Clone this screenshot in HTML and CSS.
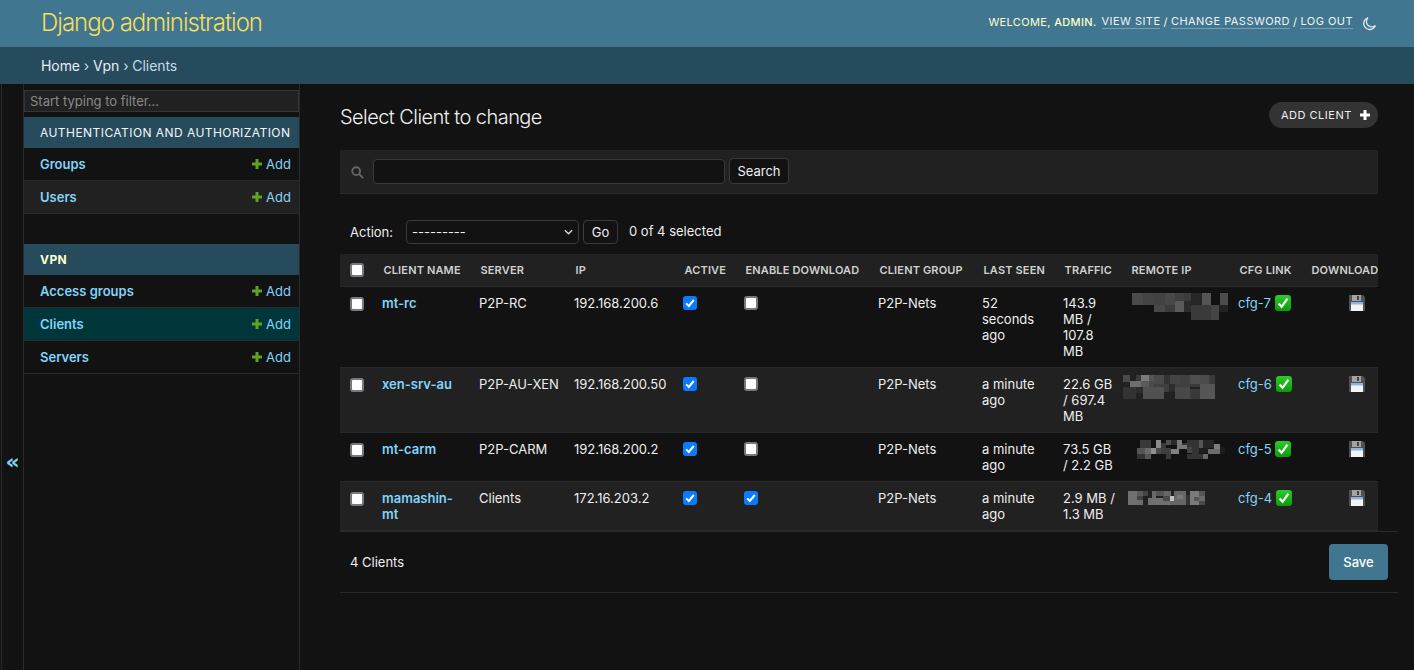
FILE: index.html
```html
<!DOCTYPE html>
<html lang="en">
<head>
<meta charset="utf-8">
<title>Select Client to change</title>
<link rel="stylesheet" href="styles.css">
</head>
<body>
<svg class="defs" width="0" height="0" aria-hidden="true">
  <defs>
    <symbol id="plus" viewBox="0 0 10 10"><path d="M3.5 0h3v3.5H10v3H6.5V10h-3V6.5H0v-3h3.5z"/></symbol>
    <linearGradient id="grn" x1="0" y1="0" x2="0" y2="1"><stop offset="0" stop-color="#2ccb2c"/><stop offset="1" stop-color="#0a9c0a"/></linearGradient>
    <symbol id="ok" viewBox="0 0 16 16"><rect width="16" height="16" rx="3.2" fill="url(#grn)"/><path d="M3.6 8.4l3 3.4 5.8-8.2" fill="none" stroke="#fff" stroke-width="2.2"/></symbol>
    <symbol id="disk" viewBox="0 0 16 16"><path d="M0 0h14l2 2v14H0z" fill="#515151"/><rect x="3" y="0" width="9" height="6" fill="#a3a3a3"/><rect x="8" y="1" width="2" height="4" fill="#444"/><rect x="2" y="7" width="12" height="9" fill="#f4f4f4"/><rect x="2" y="7" width="12" height="2.5" fill="#8fb4e0"/></symbol>
  </defs>
</svg>

<header class="topbar">
  <a class="brand" href="#">Django administration</a>
  <div class="userlinks">
    <span class="welcome">Welcome, <strong>admin</strong>.</span>
    <a href="#">View site</a> <span class="sep">/</span>
    <a href="#">Change password</a> <span class="sep">/</span>
    <a href="#">Log out</a>
    <svg class="moon" viewBox="0 0 24 24" fill="none" stroke="#e4e8ea" stroke-width="2"><path d="M9.5 2.8a9.6 9.6 0 1 0 11.9 12.4A8.6 8.6 0 0 1 9.5 2.8z"/></svg>
  </div>
</header>
<nav class="crumbs"><a href="#">Home</a> › <a href="#">Vpn</a> › Clients</nav>

<div class="page">
  <button class="toggle" type="button">«</button>
  <aside class="sidebar">
    <input class="filter" type="text" placeholder="Start typing to filter...">
    <section class="module">
      <h2 class="caption">Authentication and Authorization</h2>
      <div class="navrow"><a class="navlink" href="#">Groups</a><a class="addlink" href="#"><svg class="plus"><use href="#plus"/></svg>Add</a></div>
      <div class="navrow alt"><a class="navlink" href="#">Users</a><a class="addlink" href="#"><svg class="plus"><use href="#plus"/></svg>Add</a></div>
    </section>
    <section class="module">
      <h2 class="caption current">VPN</h2>
      <div class="navrow"><a class="navlink" href="#">Access groups</a><a class="addlink" href="#"><svg class="plus"><use href="#plus"/></svg>Add</a></div>
      <div class="navrow selected"><a class="navlink" href="#">Clients</a><a class="addlink" href="#"><svg class="plus"><use href="#plus"/></svg>Add</a></div>
      <div class="navrow"><a class="navlink" href="#">Servers</a><a class="addlink" href="#"><svg class="plus"><use href="#plus"/></svg>Add</a></div>
    </section>
  </aside>

  <main class="content">
    <div class="titlebar">
      <h1 class="title">Select Client to change</h1>
      <a class="addbtn" href="#">Add Client<svg class="plus-w"><use href="#plus"/></svg></a>
    </div>

    <form class="searchbar">
      <svg class="searchicon" viewBox="0 0 14 14" fill="none" stroke="#666" stroke-width="2"><circle cx="5.6" cy="5.6" r="4.2"/><path d="M8.8 8.8l4.2 4.2"/></svg>
      <input class="searchinput" type="text">
      <button class="btn search" type="button">Search</button>
    </form>

    <div class="actions">
      <label class="actionlabel">Action:</label>
      <div class="selectbox">---------<svg class="chev" viewBox="0 0 10 6" fill="none" stroke="#ddd" stroke-width="1.4"><path d="M1 1l4 4 4-4"/></svg></div>
      <button class="btn go" type="button">Go</button>
      <span class="counter">0 of 4 selected</span>
    </div>

    <div class="tablewrap">
      <table class="results">
        <colgroup>
          <col class="c0"><col class="c1"><col class="c2"><col class="c3"><col class="c4"><col class="c5"><col class="c6"><col class="c7"><col class="c8"><col class="c9"><col class="c10"><col class="c11">
        </colgroup>
        <thead>
          <tr>
            <th class="chk"><input class="cb" type="checkbox"></th>
            <th>Client name</th><th>Server</th><th>IP</th><th>Active</th><th>Enable download</th><th>Client group</th><th>Last seen</th><th>Traffic</th><th>Remote IP</th><th>CFG Link</th><th class="dl-h">Download</th>
          </tr>
        </thead>
        <tbody>
          <tr>
            <td class="chk"><input class="cb" type="checkbox"></td>
            <td><a class="name" href="#">mt-rc</a></td><td>P2P-RC</td><td>192.168.200.6</td>
            <td><input class="cb" type="checkbox" checked></td><td><input class="cb" type="checkbox"></td>
            <td>P2P-Nets</td><td>52 seconds ago</td><td>143.9 MB / 107.8 MB</td>
            <td><svg class="blob b1" viewBox="0 0 345 108"><path fill="#4a4a4a" d="M36 15h33v36H36z"/><path fill="#444" d="M69 15h33v36H69z"/><path fill="#424242" d="M102 15h33v36h-33z"/><path fill="#484848" d="M135 15h30v36h-30z"/><path fill="#3f3f3f" d="M165 15h27v24h-27z"/><path fill="#3b3b3b" d="M192 15h21v24h-21z"/><path fill="#262626" d="M213 15h33v36h-33z"/><path fill="#555" d="M246 15h27v36h-27z"/><path fill="#4c4c4c" d="M300 15h24v36h-24z"/><path fill="#484848" d="M102 51h33v21h-33z"/><path fill="#3c3c3c" d="M135 51h30v21h-30z"/><path fill="#5a5a5a" d="M165 39h27v33h-27z"/><path fill="#2b2b2b" d="M192 39h21v33h-21z"/><path fill="#3a3a3a" d="M213 51h60v45h-60z"/><path fill="#444" d="M273 51h24v45h-24z"/><path fill="#222" d="M297 51h27v21h-27z"/></svg></td>
            <td><a class="cfg" href="#">cfg-7</a> <svg class="ok"><use href="#ok"/></svg></td>
            <td class="dl"><svg class="disk"><use href="#disk"/></svg></td>
          </tr>
          <tr class="alt">
            <td class="chk"><input class="cb" type="checkbox"></td>
            <td><a class="name" href="#">xen-srv-au</a></td><td>P2P-AU-XEN</td><td>192.168.200.50</td>
            <td><input class="cb" type="checkbox" checked></td><td><input class="cb" type="checkbox"></td>
            <td>P2P-Nets</td><td>a minute ago</td><td>22.6 GB / 697.4 MB</td>
            <td><svg class="blob b2" viewBox="0 0 330 108"><path fill="#4a4a4a" d="M24 18h21v21H24z"/><path fill="#3a3a3a" d="M63 18h15v18H63z"/><path fill="#7a7a7a" d="M78 18h24v18H78z"/><path fill="#555" d="M102 18h15v18h-15z"/><path fill="#4a4a4a" d="M117 18h30v27h-30z"/><path fill="#333" d="M147 18h18v27h-18z"/><path fill="#434343" d="M165 18h30v27h-30z"/><path fill="#404040" d="M195 18h30v27h-30z"/><path fill="#4e4e4e" d="M225 18h30v27h-30z"/><path fill="#4c4c4c" d="M255 18h27v27h-27z"/><path fill="#3a3a3a" d="M282 18h18v27h-18z"/><path fill="#6e6e6e" d="M45 36h33v18H45z"/><path fill="#5a5a5a" d="M78 36h24v18H78z"/><path fill="#4a4a4a" d="M102 36h15v18h-15z"/><path fill="#3f3f3f" d="M117 45h108v9H117z"/><path fill="#3a3a3a" d="M225 45h30v9h-30z"/><path fill="#333" d="M24 54h39v36H24z"/><path fill="#2c2c2c" d="M63 54h21v18H63z"/><path fill="#515151" d="M84 54h63v36H84z"/><path fill="#3e3e3e" d="M147 54h15v15h-15z"/><path fill="#2c2c2c" d="M162 45h18v23h-18z"/><path fill="#484848" d="M180 54h45v36h-45z"/><path fill="#3a3a3a" d="M225 60h30v30h-30z"/><path fill="#565656" d="M255 45h45v45h-45z"/></svg></td>
            <td><a class="cfg" href="#">cfg-6</a> <svg class="ok"><use href="#ok"/></svg></td>
            <td class="dl"><svg class="disk"><use href="#disk"/></svg></td>
          </tr>
          <tr>
            <td class="chk"><input class="cb" type="checkbox"></td>
            <td><a class="name" href="#">mt-carm</a></td><td>P2P-CARM</td><td>192.168.200.2</td>
            <td><input class="cb" type="checkbox" checked></td><td><input class="cb" type="checkbox"></td>
            <td>P2P-Nets</td><td>a minute ago</td><td>73.5 GB / 2.2 GB</td>
            <td><svg class="blob b3" viewBox="0 0 330 108"><path fill="#3a3a3a" d="M45 15h33v24H45z"/><path fill="#8a8a8a" d="M93 15h15v24H93z"/><path fill="#3a3a3a" d="M108 24h15v15h-15z"/><path fill="#4f4f4f" d="M123 15h15v15h-15z"/><path fill="#2a2a2a" d="M138 15h18v15h-18z"/><path fill="#7a7a7a" d="M156 15h15v15h-15z"/><path fill="#333" d="M171 24h15v6h-15z"/><path fill="#333" d="M186 15h36v24h-36z"/><path fill="#555" d="M222 15h12v24h-12z"/><path fill="#262626" d="M234 15h33v24h-33z"/><path fill="#555" d="M36 39h24v18H36z"/><path fill="#6a6a6a" d="M60 39h18v18H60z"/><path fill="#8f8f8f" d="M78 39h15v18H78z"/><path fill="#4a4a4a" d="M93 39h15v18H93z"/><path fill="#3f3f3f" d="M108 39h30v18h-30z"/><path fill="#808080" d="M138 42h24v15h-24z"/><path fill="#777" d="M156 30h30v12h-30z"/><path fill="#444" d="M186 36h15v18h-15z"/><path fill="#333" d="M201 39h21v18h-21z"/><path fill="#1e1e1e" d="M222 39h27v15h-27z"/><path fill="#6b6b6b" d="M249 42h36v15h-36z"/><path fill="#7d7d7d" d="M267 27h18v15h-18z"/><path fill="#1c1c1c" d="M285 36h15v21h-15z"/><path fill="#333" d="M36 57h24v15H36z"/><path fill="#555" d="M60 57h18v15H60z"/><path fill="#3a3a3a" d="M123 57h15v15h-15z"/><path fill="#333" d="M186 57h48v15h-48z"/><path fill="#6a6a6a" d="M234 57h15v15h-15z"/></svg></td>
            <td><a class="cfg" href="#">cfg-5</a> <svg class="ok"><use href="#ok"/></svg></td>
            <td class="dl"><svg class="disk"><use href="#disk"/></svg></td>
          </tr>
          <tr class="alt">
            <td class="chk"><input class="cb" type="checkbox"></td>
            <td><a class="name" href="#">mamashin-mt</a></td><td>Clients</td><td>172.16.203.2</td>
            <td><input class="cb" type="checkbox" checked></td><td><input class="cb" type="checkbox" checked></td>
            <td>P2P-Nets</td><td>a minute ago</td><td>2.9 MB / 1.3 MB</td>
            <td><svg class="blob b4" viewBox="0 0 330 108"><path fill="#707070" d="M24 21h27v42H24z"/><path fill="#5a5a5a" d="M51 21h18v15H51z"/><path fill="#444" d="M69 21h15v15H69z"/><path fill="#444" d="M51 36h18v12H51z"/><path fill="#6d6d6d" d="M51 48h18v15H51z"/><path fill="#6a6a6a" d="M96 21h12v21H96z"/><path fill="#555" d="M108 21h24v15h-24z"/><path fill="#666" d="M132 21h21v15h-21z"/><path fill="#707070" d="M84 42h66v21H84z"/><path fill="#4a4a4a" d="M129 36h21v15h-21z"/><path fill="#c0c0c0" d="M150 36h12v15h-12z"/><path fill="#666" d="M150 51h48v12h-48z"/><path fill="#666" d="M162 21h36v30h-36z"/><path fill="#777" d="M171 33h18v12h-18z"/><path fill="#333" d="M198 33h12v30h-12z"/><path fill="#7a7a7a" d="M210 21h27v42h-27z"/><path fill="#555" d="M222 39h15v12h-15z"/><path fill="#555" d="M237 21h18v15h-18z"/><path fill="#6a6a6a" d="M237 36h18v15h-18z"/><path fill="#4a4a4a" d="M237 51h18v12h-18z"/></svg></td>
            <td><a class="cfg" href="#">cfg-4</a> <svg class="ok"><use href="#ok"/></svg></td>
            <td class="dl"><svg class="disk"><use href="#disk"/></svg></td>
          </tr>
        </tbody>
      </table>
    </div>

    <div class="paginator">
      <span>4 Clients</span>
      <button class="save" type="button">Save</button>
    </div>
  </main>
</div>
</body>
</html>
```
FILE: styles.css
```css
* { box-sizing: border-box; }
html, body { height: 100%; }
body {
  margin: 0;
  background: #121212;
  color: #eeeeee;
  font-family: Inter, "Liberation Sans", sans-serif;
  font-size: 13px;
  line-height: 16px;
  overflow: hidden;
  display: flex;
  flex-direction: column;
}
a { text-decoration: none; }
.defs { position: absolute; }

.topbar {
  height: 47px;
  flex: none;
  background: #417690;
  display: flex;
  align-items: center;
  justify-content: space-between;
  padding: 0 37px 0 41px;
}
.brand { color: #f5dd5d; font-size: 24px; font-weight: 300; line-height: 30px; letter-spacing: -1px; padding-bottom: 2px; }
.userlinks {
  display: flex;
  align-items: center;
  gap: 3px;
  font-size: 11px;
  letter-spacing: 0.46px;
  text-transform: uppercase;
  color: #ffc;
  white-space: nowrap;
  padding-bottom: 4px;
}
.welcome { margin-right: 2px; letter-spacing: 0.35px; }
.userlinks strong { font-weight: 500; }
.userlinks a {
  color: #f0f3f5;
  border-bottom: 1px solid rgba(255,255,255,0.3);
  line-height: 13px;
}
.sep { color: #ffc; }
.moon { width: 15px; height: 15px; margin-left: 6px; margin-top: 3px; }

.crumbs {
  height: 37px;
  flex: none;
  background: #264b5d;
  padding: 0 41px;
  color: #c4dce8;
  font-size: 14px;
  line-height: 37px;
  letter-spacing: -0.07px;
}
.crumbs a { color: #e6eef2; }

.page { flex: 1; display: flex; min-height: 0; }
.toggle {
  width: 23px;
  flex: none;
  background: #121212;
  border: 0;
  border-left: 1px solid #2a2a2a;
  border-right: 1px solid #2a2a2a;
  color: #81d4fa;
  font-family: "DejaVu Sans", sans-serif;
  font-size: 22px;
  font-weight: 700;
  padding: 168px 0 0;
  margin: 0 0 0 1px;
  display: flex;
  align-items: center;
  justify-content: center;
}
.sidebar {
  width: 276px;
  flex: none;
  border-right: 1px solid #2a2a2a;
  padding-top: 6px;
}
.filter {
  display: block;
  width: 100%;
  height: 22px;
  background: #212121;
  border: 1px solid #353535;
  color: #eee;
  font: 13px Inter, sans-serif;
  padding: 0 5px;
  margin-bottom: 5px;
  outline: 0;
}
.filter::placeholder { color: #8a8a8a; opacity: 1; }
.module { margin-bottom: 30px; }
.caption {
  margin: 0;
  height: 31px;
  background: #264b5d;
  color: #f5f5f5;
  font-size: 12px;
  font-weight: 400;
  letter-spacing: 0.44px;
  line-height: 31px;
  padding-left: 16px;
  text-transform: uppercase;
  white-space: nowrap;
}
.caption.current { color: #ffc; font-weight: 700; }
.navrow {
  height: 33px;
  display: flex;
  align-items: center;
  justify-content: space-between;
  padding: 0 8px 0 16px;
  border-bottom: 1px solid #2a2a2a;
}
.navrow.alt { background: #212121; }
.navrow.selected { background: #00363a; }
.navlink { color: #81d4fa; font-weight: 600; }
.addlink { color: #81d4fa; display: flex; align-items: center; gap: 4px; }
.plus { width: 10px; height: 10px; fill: #5fa225; }

.content {
  flex: 1;
  min-width: 0;
  padding: 18px 16px 0 40px;
}
.titlebar {
  display: flex;
  align-items: center;
  justify-content: space-between;
  margin-right: 20px;
  height: 30px;
  margin-bottom: 18px;
}
.title { margin: 0; font-size: 20px; font-weight: 300; color: #f0f0f0; line-height: 30px; letter-spacing: -0.56px; }
.addbtn {
  align-self: flex-start;
  height: 26px;
  width: 109px;
  border-radius: 13px;
  background: #333;
  color: #f0f0f0;
  font-size: 11px;
  letter-spacing: 0.5px;
  text-transform: uppercase;
  display: flex;
  align-items: center;
  justify-content: space-between;
  padding: 0 8px 0 12px;
}
.plus-w { width: 10px; height: 10px; fill: #fff; }

.searchbar {
  height: 44px;
  margin-right: 20px;
  background: #212121;
  border-bottom: 1px solid #2a2a2a;
  display: flex;
  align-items: center;
  padding: 0 0 1px 11px;
}
.searchicon { width: 13px; height: 13px; margin-right: 9px; margin-top: 2px; }
.searchinput {
  width: 352px;
  height: 25px;
  background: #121212;
  border: 1px solid #3a3a3a;
  border-radius: 4px;
  margin-right: 4px;
}
.btn {
  background: #121212;
  border: 1px solid #3a3a3a;
  border-radius: 4px;
  color: #eee;
  font: 13px Inter, sans-serif;
  padding: 0;
}
.search { width: 60px; height: 26px; }

.actions {
  height: 60px;
  margin-right: 20px;
  display: flex;
  align-items: center;
  padding: 16px 0 0 10px;
}
.actionlabel { width: 56px; }
.selectbox {
  width: 173px;
  height: 24px;
  border: 1px solid #3a3a3a;
  border-radius: 4px;
  background: #121212;
  display: flex;
  align-items: center;
  justify-content: space-between;
  padding: 0 5px;
  margin-right: 4px;
}
.chev { width: 9px; height: 6px; }
.go { width: 35px; height: 24px; margin-right: 11px; }
.counter { margin-top: -2px; }

.tablewrap { margin-right: 20px; overflow: hidden; }
.results {
  table-layout: fixed;
  width: 1071px;
  border-collapse: separate;
  border-spacing: 0;
}
.c0 { width: 34px; } .c1 { width: 97px; } .c2 { width: 95px; } .c3 { width: 109px; }
.c4 { width: 61px; } .c5 { width: 134px; } .c6 { width: 104px; } .c7 { width: 81px; }
.c8 { width: 67px; } .c9 { width: 108px; } .c10 { width: 72px; } .c11 { width: 109px; }
.results th {
  height: 33px;
  background: #212121;
  border-bottom: 1px solid #2a2a2a;
  color: #d0d0d0;
  font-size: 11px;
  font-weight: 600;
  letter-spacing: 0.15px;
  padding: 0 0 0 9.5px;
  text-align: left;
  text-transform: uppercase;
  white-space: nowrap;
}
.results td {
  padding: 8px 6px 8px 8px;
  border-bottom: 1px solid #2a2a2a;
  vertical-align: top;
  word-break: normal;
}
.results .alt td { background: #212121; }
.results .chk { padding: 0 0 0 10px; }
.results td.chk { padding-top: 9px; }
.results td.dl { text-align: center; padding-right: 8px; }
.cb {
  appearance: none;
  display: block;
  width: 14px;
  height: 14px;
  margin: 1px 0 0;
  background: #fff;
  border: 2px solid #77777f;
  border-radius: 3px;
}
.cb:checked {
  background: #0a7aff url("data:image/svg+xml,%3Csvg xmlns='http://www.w3.org/2000/svg' viewBox='0 0 14 14'%3E%3Cpath d='M3.2 7.4l2.6 2.6 5-6' fill='none' stroke='%23fff' stroke-width='2'/%3E%3C/svg%3E") center/14px 14px no-repeat;
  border: 0;
}
.results th .cb { margin-top: 0; }
.name { color: #81d4fa; font-weight: 600; }
.cfg { color: #81d4fa; }
.ok { width: 16px; height: 16px; vertical-align: -3px; }
.disk { width: 16px; height: 16px; display: block; margin: 0 auto; }
.blob { display: block; width: 110px; height: 36px; margin-bottom: -36px; overflow: visible; }
.b1 { width: 115px; margin: -7px 0 -29px -10px; }
.b2 { margin: -7px 0 -29px -15px; }
.b3 { margin: -6px 0 -30px -5px; }
.b4 { margin: -6px 0 -30px -10px; }

.paginator {
  height: 62px;
  border-bottom: 1px solid #2a2a2a;
  border-top: 1px solid #2a2a2a;
  display: flex;
  align-items: center;
  justify-content: space-between;
  padding: 0 10px;
}
.save {
  width: 59px;
  height: 36px;
  background: #417690;
  border: 0;
  border-radius: 4px;
  color: #fff;
  font: 500 13px Inter, sans-serif;
  padding: 0;
}
```
